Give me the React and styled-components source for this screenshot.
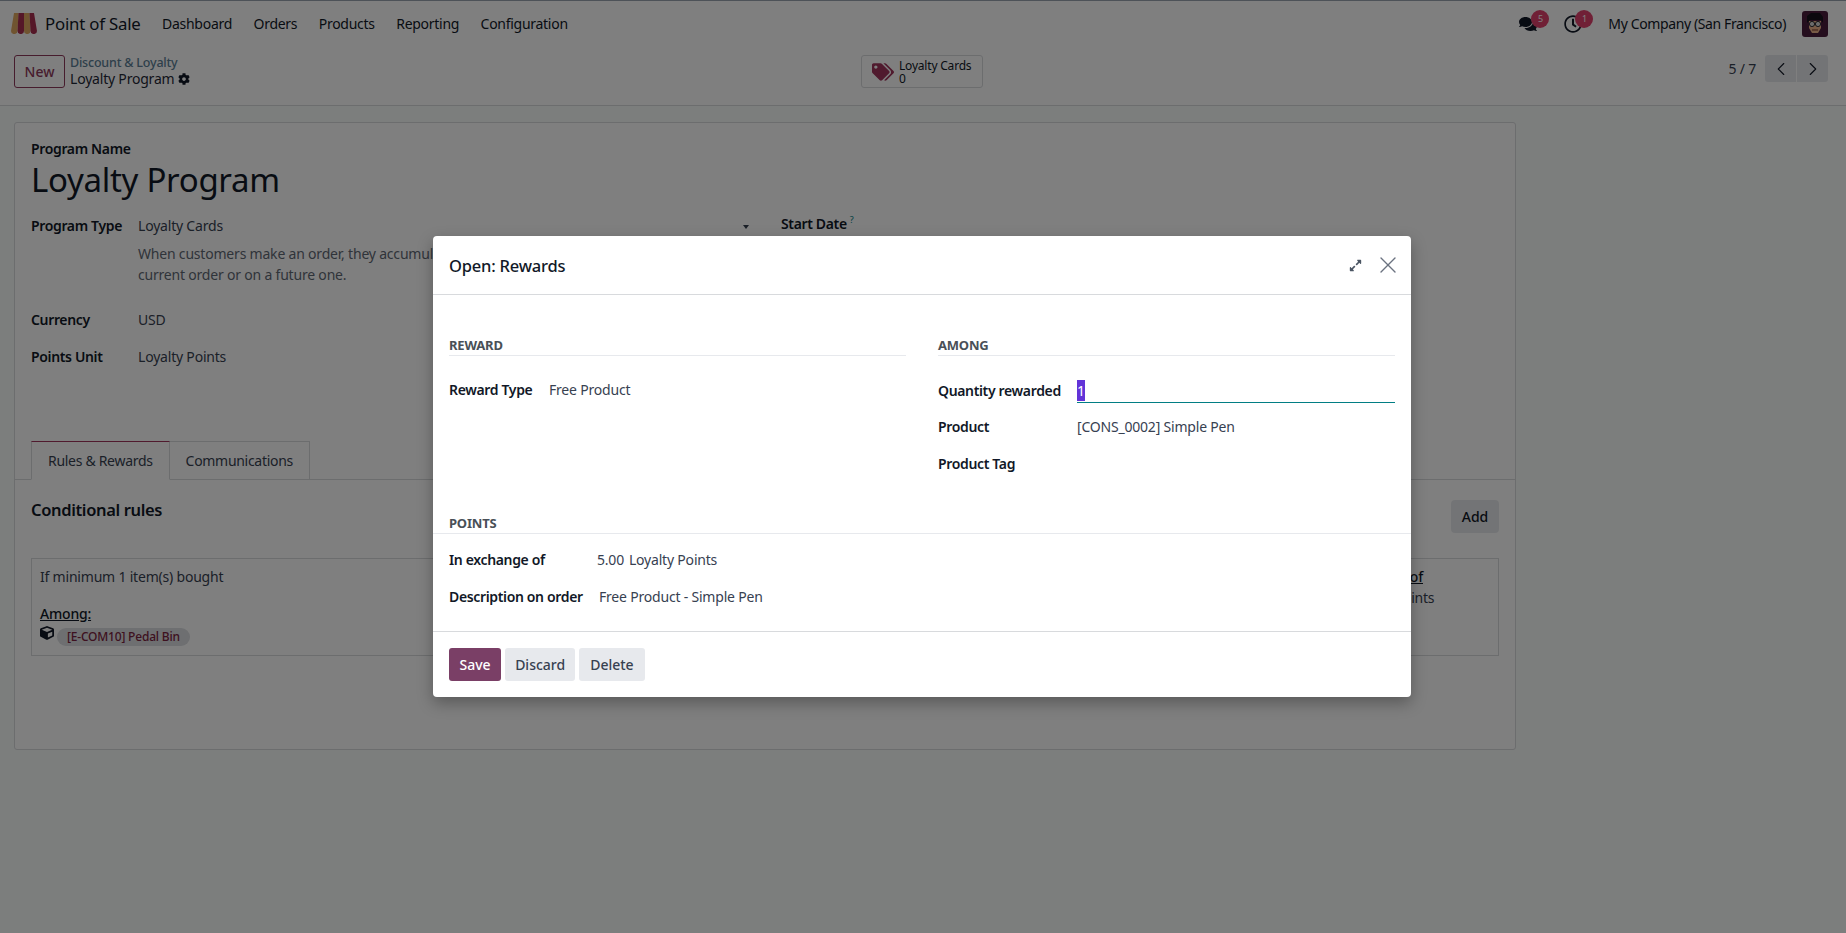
import React from "react";
import styled, { createGlobalStyle } from "styled-components";
import { FaCog, FaComments, FaTags, FaCube, FaExpandAlt, FaRegClock } from "react-icons/fa";
import { ChevronLeft, ChevronRight, X } from "lucide-react";

const GlobalStyle = createGlobalStyle`
  html, body {
    margin: 0;
    height: 100%;
    overflow: hidden;
    background: #f9fdfb;
    color: #374151;
    font-family: "Noto Sans", "Open Sans", sans-serif;
    font-size: 14px;
    letter-spacing: -0.2px;
  }
  * { box-sizing: border-box; }
`;

const Page = styled.div`
  height: 933px;
  overflow: hidden;
  position: relative;
`;

const TopBar = styled.header`
  height: 46px;
  background: #fff;
  border-top: 1px solid #9aa5b1;
  display: flex;
  align-items: center;
  padding: 0 18px 0 11px;
`;

const Brand = styled.div`
  display: flex;
  align-items: center;
  gap: 8px;
  font-size: 16.8px;
  color: #111827;
  margin-right: 21.5px;
`;

const NavItem = styled.span`
  color: #111827;
  margin-right: 21.5px;
  letter-spacing: -0.28px;
`;

const Systray = styled.div`
  margin-left: auto;
  display: flex;
  align-items: center;
`;

const TrayIcon = styled.span`
  position: relative;
  display: flex;
  color: #111827;
  font-size: 18px;
  margin-right: ${(p) => p.$gap}px;
`;

const Badge = styled.span`
  position: absolute;
  top: -5px;
  left: ${(p) => p.$left}px;
  width: 18px;
  height: 18px;
  border-radius: 50%;
  background: #e0406c;
  color: #fff;
  font-size: 9px;
  line-height: 18px;
  text-align: center;
`;

const Company = styled.span`
  color: #111827;
  margin-right: 16px;
  letter-spacing: -0.38px;
`;

const ControlPanel = styled.div`
  height: 60px;
  background: #fff;
  border-bottom: 1px solid #d8dadd;
  padding: 9px 18px 0 14px;
  display: grid;
  grid-template-columns: 847px 1fr auto;
`;

const CrumbGroup = styled.div`
  display: flex;
  gap: 5px;
`;

const NewButton = styled.button`
  width: 51px;
  height: 33px;
  background: #fff;
  border: 1px solid #8f3a5c;
  border-radius: 3px;
  color: #8f3a5c;
  font: inherit;
  font-weight: 500;
  padding: 0;
`;

const Crumbs = styled.div`
  display: flex;
  flex-direction: column;
  padding-top: 1px;
`;

const CrumbLink = styled.span`
  font-size: 12.5px;
  font-weight: 500;
  line-height: 14px;
  color: #5d7f96;
`;

const CrumbCurrent = styled.span`
  display: flex;
  align-items: center;
  gap: 4px;
  color: #1f2937;
  line-height: 18px;
  font-size: 14px;
  svg { font-size: 12px; color: #111827; }
`;

const StatButton = styled.div`
  width: 122px;
  height: 33px;
  border: 1px solid #d8dadd;
  border-radius: 3px;
  display: flex;
  align-items: center;
  gap: 5px;
  padding-left: 10px;
  svg { font-size: 22px; color: #a0345c; flex: none; }
`;

const StatText = styled.div`
  font-size: 12px;
  line-height: 13.5px;
  color: #111827;
  padding-top: 1px;
`;

const Pager = styled.div`
  display: flex;
  align-items: flex-start;
  color: #374151;
`;

const PagerCount = styled.span`
  line-height: 27px;
  margin-right: 9px;
`;

const PagerButton = styled.button`
  width: 31px;
  height: 27px;
  padding: 0;
  border: 0;
  margin-left: ${(p) => (p.$second ? 1 : 0)}px;
  background: #e7e9ed;
  color: #111827;
  border-radius: ${(p) => (p.$second ? "0 3px 3px 0" : "3px 0 0 3px")};
  display: flex;
  align-items: center;
  justify-content: center;
`;

const Main = styled.main`
  padding: 16px 0 0 14px;
`;

const Card = styled.section`
  width: 1502px;
  height: 628px;
  background: #fff;
  border: 1px solid #d8dadd;
  border-radius: 3px;
  padding-top: 16px;
`;

const CardHead = styled.div`
  padding: 0 16px;
`;

const NameLabel = styled.div`
  font-weight: 600;
  letter-spacing: -0.35px;
  color: #111827;
  line-height: 19px;
`;

const Title = styled.h1`
  margin: 0;
  font-size: 33px;
  font-weight: 400;
  line-height: 44px;
  color: #111827;
  letter-spacing: -0.3px;
`;

const MainRow = styled.div`
  display: grid;
  grid-template-columns: 750px 1fr;
  margin-top: 14px;
`;

const BgField = styled.div`
  display: grid;
  grid-template-columns: 107px 1fr;
  align-items: baseline;
  min-height: ${(p) => p.$h || 37}px;
  position: relative;
`;

const BoldLabel = styled.span`
  font-weight: 600;
  letter-spacing: -0.35px;
  color: #111827;
`;

const Value = styled.span`
  color: #374151;
`;

const Caret = styled.span`
  position: absolute;
  left: 712px;
  top: 9px;
  border: 3.5px solid transparent;
  border-top: 4px solid #374151;
  border-bottom: 0;
`;

const HelpText = styled.div`
  grid-column: 2;
  color: #5f6874;
  line-height: 21px;
  width: 640px;
  margin-top: 8px;
  margin-bottom: 25px;
`;

const StartDate = styled.div`
  margin-top: -3px;
`;

const Sup = styled.sup`
  font-size: 9px;
  color: #017e84;
  margin-left: 3px;
`;

const TabBar = styled.div`
  display: flex;
  margin-top: 57px;
  padding-left: 16px;
  border-bottom: 1px solid #d8dadd;
  height: 39px;
`;

const Tab = styled.div`
  height: 39px;
  padding: 0 16px;
  line-height: 37px;
  letter-spacing: -0.3px;
  border: 1px solid #d8dadd;
  border-left: ${(p) => (p.$active ? "1px solid #d8dadd" : "0")};
  border-top: 1px solid ${(p) => (p.$active ? "#a0345c" : "#d8dadd")};
  border-bottom: ${(p) => (p.$active ? "1px solid #fff" : "1px solid #d8dadd")};
  color: #374151;
`;

const RulesHead = styled.div`
  display: flex;
  justify-content: space-between;
  align-items: flex-start;
  padding: 20px 16px 0;
  height: 78px;
`;

const RulesTitle = styled.h3`
  margin: -1px 0 0;
  font-size: 16.5px;
  font-weight: 600;
  letter-spacing: -0.35px;
  line-height: 22px;
  color: #111827;
`;

const GhostButton = styled.button`
  width: 48px;
  height: 33px;
  background: #e7e9ed;
  border: 0;
  border-radius: 4px;
  color: #111827;
  font: inherit;
  font-weight: 500;
`;

const RuleBox = styled.div`
  margin: 0 16px;
  height: 98px;
  border: 1px solid #d8dadd;
  padding: 7px 8px;
  display: grid;
  grid-template-columns: 1287px 1fr;
`;

const RuleLine = styled.div`
  line-height: 21px;
  margin-bottom: ${(p) => p.$mb || 0}px;
  padding-left: ${(p) => p.$indent || 0}px;
`;

const Underlined = styled.span`
  text-decoration: underline;
  color: #111827;
  font-weight: 500;
`;

const TagRow = styled.div`
  display: flex;
  gap: 3px;
  margin-top: 4px;
  svg { font-size: 14px; color: #111827; margin-top: -2px; }
`;

const Tag = styled.span`
  background: #dcdee2;
  border-radius: 10px;
  padding: 0 10px;
  line-height: 18px;
  font-size: 12px;
  color: #7c2340;
  font-weight: 500;
`;

const Backdrop = styled.div`
  position: absolute;
  inset: 0;
  background: rgba(0, 0, 0, 0.5);
  display: flex;
  justify-content: center;
  padding: 236px 2px 0 0;
`;

const Modal = styled.div`
  width: 978px;
  height: 461px;
  background: #fff;
  border-radius: 4px;
  display: flex;
  flex-direction: column;
  box-shadow: 0 6px 16px rgba(0, 0, 0, 0.3);
`;

const ModalHeader = styled.div`
  height: 59px;
  border-bottom: 1px solid #d8dadd;
  display: flex;
  align-items: center;
  padding: 0 16px;
`;

const ModalTitle = styled.h4`
  margin: 0 auto 0 0;
  font-size: 16.5px;
  font-weight: 500;
  color: #111827;
`;

const ExpandIcon = styled.span`
  display: flex;
  color: #4b5563;
  margin-right: 12px;
`;

const CloseIcon = styled.span`
  display: flex;
  color: #6b7280;
  margin-right: -7px;
`;

const ModalBody = styled.div`
  flex: 1;
  padding-top: 41px;
`;

const Columns = styled.div`
  display: grid;
  grid-template-columns: 457px 457px;
  column-gap: 32px;
  padding: 0 16px;
  height: 178px;
`;

const Separator = styled.div`
  font-size: 13px;
  font-weight: 700;
  color: #495057;
  text-transform: uppercase;
  line-height: 19px;
  border-bottom: 1px solid #e7e9ed;
  margin-bottom: 24px;
  height: 20px;
`;

const FieldRow = styled.div`
  display: grid;
  grid-template-columns: ${(p) => p.$label}px 1fr;
  align-items: baseline;
  height: ${(p) => p.$h || 37}px;
`;

const InputLine = styled.div`
  border-bottom: 1px solid #017e84;
  height: 23px;
  line-height: 21px;
`;

const Selected = styled.span`
  display: inline-block;
  width: 8px;
  height: 21px;
  background: #6233d8;
  color: #fff;
  text-align: center;
`;

const PointsHead = styled(Separator)`
  padding: 0 16px;
  margin-bottom: 16px;
`;

const PointsRows = styled.div`
  padding: 0 16px;
`;

const Inline = styled.span`
  display: flex;
  gap: 5px;
`;

const ModalFooter = styled.div`
  height: 66px;
  border-top: 1px solid #d8dadd;
  display: flex;
  align-items: flex-start;
  gap: 4px;
  padding: 16px 16px 0;
`;

const FooterButton = styled.button`
  height: 33px;
  padding: 0 ${(p) => p.$pad || 10}px;
  border: 0;
  border-radius: 3px;
  background: ${(p) => (p.$primary ? "#7a3f66" : "#e7e9ed")};
  color: ${(p) => (p.$primary ? "#fff" : "#374151")};
  font: inherit;
  font-weight: 500;
`;

const PosLogo = () => (
  <svg width="26" height="21" viewBox="0 0 26 21">
    <path d="M3 0h4.5L6.5 18a3.2 3 0 0 1-6.5 0z" fill="#e0a860" />
    <path d="M7.5 0H13v18a3.2 3 0 0 1-6.5 0z" fill="#ab2f50" />
    <path d="M13 0h5.5l1 18a3.2 3 0 0 1-6.5 0z" fill="#e0a860" />
    <path d="M18.5 0H23l3 18a3.2 3 0 0 1-6.5 0z" fill="#ab2f50" />
  </svg>
);

const Avatar = () => (
  <svg width="26" height="26" viewBox="0 0 26 26">
    <rect width="26" height="26" rx="3" fill="#4a1d3c" />
    <path d="M5 12V5l4-3h9l3 4v6l-2-3H8z" fill="#17131c" />
    <path d="M7 10h12v7l-3 5h-6l-3-5z" fill="#efb58c" />
    <circle cx="10" cy="13" r="2.6" fill="#d9d9d9" stroke="#2b2b33" strokeWidth="1" />
    <circle cx="16" cy="13" r="2.6" fill="#d9d9d9" stroke="#2b2b33" strokeWidth="1" />
    <path d="M10 19h6" stroke="#8a4a3a" strokeWidth="1.2" />
  </svg>
);

export default function App() {
  return (
    <Page>
      <GlobalStyle />
      <TopBar>
        <Brand>
          <PosLogo />
          Point of Sale
        </Brand>
        <NavItem>Dashboard</NavItem>
        <NavItem>Orders</NavItem>
        <NavItem>Products</NavItem>
        <NavItem>Reporting</NavItem>
        <NavItem>Configuration</NavItem>
        <Systray>
          <TrayIcon $gap={27}>
            <FaComments />
            <Badge $left={12}>5</Badge>
          </TrayIcon>
          <TrayIcon $gap={26}>
            <FaRegClock />
            <Badge $left={11}>1</Badge>
          </TrayIcon>
          <Company>My Company (San Francisco)</Company>
          <Avatar />
        </Systray>
      </TopBar>
      <ControlPanel>
        <CrumbGroup>
          <NewButton>New</NewButton>
          <Crumbs>
            <CrumbLink>Discount &amp; Loyalty</CrumbLink>
            <CrumbCurrent>
              Loyalty Program <FaCog />
            </CrumbCurrent>
          </Crumbs>
        </CrumbGroup>
        <StatButton>
          <FaTags />
          <StatText>
            Loyalty Cards
            <br />0
          </StatText>
        </StatButton>
        <Pager>
          <PagerCount>5 / 7</PagerCount>
          <PagerButton>
            <ChevronLeft size={22} strokeWidth={1.2} />
          </PagerButton>
          <PagerButton $second>
            <ChevronRight size={22} strokeWidth={1.2} />
          </PagerButton>
        </Pager>
      </ControlPanel>
      <Main>
        <Card>
          <CardHead>
            <NameLabel>Program Name</NameLabel>
            <Title>Loyalty Program</Title>
            <MainRow>
              <div>
                <BgField $h={29}>
                  <BoldLabel>Program Type</BoldLabel>
                  <Value>Loyalty Cards</Value>
                  <Caret />
                  <HelpText>
                    When customers make an order, they accumulate points they can exchange for rewards on the
                    current order or on a future one.
                  </HelpText>
                </BgField>
                <BgField>
                  <BoldLabel>Currency</BoldLabel>
                  <Value>USD</Value>
                </BgField>
                <BgField>
                  <BoldLabel>Points Unit</BoldLabel>
                  <Value>Loyalty Points</Value>
                </BgField>
              </div>
              <StartDate>
                <BoldLabel>Start Date</BoldLabel>
                <Sup>?</Sup>
              </StartDate>
            </MainRow>
          </CardHead>
          <TabBar>
            <Tab $active>Rules &amp; Rewards</Tab>
            <Tab>Communications</Tab>
          </TabBar>
          <RulesHead>
            <RulesTitle>Conditional rules</RulesTitle>
            <GhostButton>Add</GhostButton>
          </RulesHead>
          <RuleBox>
            <div>
              <RuleLine $mb={16}>If minimum 1 item(s) bought</RuleLine>
              <RuleLine>
                <Underlined>Among:</Underlined>
              </RuleLine>
              <TagRow>
                <FaCube />
                <Tag>[E-COM10] Pedal Bin</Tag>
              </TagRow>
            </div>
            <div>
              <RuleLine>
                <Underlined>In exchange of</Underlined>
              </RuleLine>
              <RuleLine $indent={8}>5 Loyalty Points</RuleLine>
            </div>
          </RuleBox>
        </Card>
      </Main>
      <Backdrop>
        <Modal>
          <ModalHeader>
            <ModalTitle>Open: Rewards</ModalTitle>
            <ExpandIcon>
              <FaExpandAlt size={13} />
            </ExpandIcon>
            <CloseIcon>
              <X size={28} strokeWidth={1.2} />
            </CloseIcon>
          </ModalHeader>
          <ModalBody>
            <Columns>
              <div>
                <Separator>Reward</Separator>
                <FieldRow $label={100}>
                  <BoldLabel>Reward Type</BoldLabel>
                  <Value>Free Product</Value>
                </FieldRow>
              </div>
              <div>
                <Separator>Among</Separator>
                <FieldRow $label={139}>
                  <BoldLabel>Quantity rewarded</BoldLabel>
                  <InputLine>
                    <Selected>1</Selected>
                  </InputLine>
                </FieldRow>
                <FieldRow $label={139}>
                  <BoldLabel>Product</BoldLabel>
                  <Value>[CONS_0002] Simple Pen</Value>
                </FieldRow>
                <FieldRow $label={139}>
                  <BoldLabel>Product Tag</BoldLabel>
                  <span />
                </FieldRow>
              </div>
            </Columns>
            <PointsHead>Points</PointsHead>
            <PointsRows>
              <FieldRow $label={148}>
                <BoldLabel>In exchange of</BoldLabel>
                <Inline>
                  <Value>5.00</Value>
                  <Value>Loyalty Points</Value>
                </Inline>
              </FieldRow>
              <FieldRow $label={150}>
                <BoldLabel>Description on order</BoldLabel>
                <Value>Free Product - Simple Pen</Value>
              </FieldRow>
            </PointsRows>
          </ModalBody>
          <ModalFooter>
            <FooterButton $primary $pad={10.5}>Save</FooterButton>
            <FooterButton>Discard</FooterButton>
            <FooterButton $pad={11}>Delete</FooterButton>
          </ModalFooter>
        </Modal>
      </Backdrop>
    </Page>
  );
}
